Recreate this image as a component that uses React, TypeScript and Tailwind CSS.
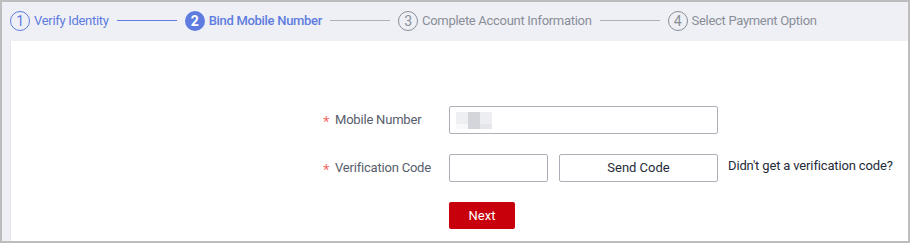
import React from 'react';

// ─── Steps ────────────────────────────────────────────────────────

const STEPS = [
  { n: 1, label: 'Verify Identity', state: 'done' },
  { n: 2, label: 'Bind Mobile Number', state: 'active' },
  { n: 3, label: 'Complete Account Information', state: 'todo' },
  { n: 4, label: 'Select Payment Option', state: 'todo' },
] as const;

function StepCircle({ n, state }: { n: number; state: string }) {
  if (state === 'active') {
    return (
      <span className="w-[20px] h-[20px] rounded-full bg-[#5e7ce0] text-white text-[14px] font-bold flex items-center justify-center leading-none">
        {n}
      </span>
    );
  }
  return (
    <span
      className={
        state === 'done'
          ? 'w-[20px] h-[20px] rounded-full border border-[#5e7ce0] text-[#5e7ce0] text-[14px] flex items-center justify-center leading-none'
          : 'w-[20px] h-[20px] rounded-full border border-[#8a8e99] text-[#8a8e99] text-[14px] flex items-center justify-center leading-none'
      }
    >
      {n}
    </span>
  );
}

function Stepper() {
  return (
    <div className="h-[39px] flex items-center pl-[8px] pb-[2px] tracking-[-0.3px]">
      {STEPS.map((s, i) => (
        <div key={s.n} className="flex items-center">
          {i > 0 && (
            <span
              className={
                STEPS[i - 1].state === 'done'
                  ? 'w-[60px] h-px bg-[#5e7ce0] mx-[8px]'
                  : 'w-[60px] h-px bg-[#adb0b8] mx-[8px]'
              }
            />
          )}
          <StepCircle n={s.n} state={s.state} />
          <span
            className={
              s.state === 'active'
                ? 'ml-[4px] text-[13px] font-medium text-[#5e7ce0]'
                : s.state === 'done'
                ? 'ml-[4px] text-[13px] text-[#5e7ce0]'
                : 'ml-[4px] text-[13px] text-[#8a8e99]'
            }
          >
            {s.label}
          </span>
        </div>
      ))}
    </div>
  );
}

// ─── Form ─────────────────────────────────────────────────────────

function Label({ children }: { children: React.ReactNode }) {
  return (
    <div className="w-[126px] flex items-center text-[13px] text-[#575d6c] tracking-[-0.2px]">
      <span className="text-[#f66f6a] w-[12px] text-[15px] leading-none translate-y-[2px]">*</span>
      {children}
    </div>
  );
}

export default function App() {
  return (
    <div
      className="w-[910px] h-[243px] border-2 border-[#bdbdbd] bg-[#eef0f5] flex flex-col overflow-hidden"
      style={{ fontFamily: 'Roboto, "Liberation Sans", sans-serif' }}
    >
      <Stepper />

      <div className="flex-1 ml-[8px] bg-white border-l border-[#e4e6ec] pl-[312px] pt-[65px]">
        {/* Mobile number */}
        <div className="flex items-center h-[28px]">
          <Label>Mobile Number</Label>
          <div className="w-[269px] h-[28px] border border-[#adb0b8] rounded-[2px] flex items-center pl-[6px]">
            {/* masked value */}
            <div className="flex flex-col">
              <div className="flex">
                <span className="w-[12px] h-[12px] bg-[#eeeff2]" />
                <span className="w-[12px] h-[17px] bg-[#d3d5db]" />
                <span className="w-[12px] h-[12px] bg-[#eceef1]" />
              </div>
              <div className="flex -mt-[5px]">
                <span className="w-[12px] h-[5px] bg-[#f8f8fa]" />
                <span className="w-[12px] h-[5px] bg-transparent" />
                <span className="w-[12px] h-[5px] bg-[#e4e6ea]" />
              </div>
            </div>
          </div>
        </div>

        {/* Verification code */}
        <div className="flex items-center h-[28px] mt-[20px]">
          <Label>Verification Code</Label>
          <div className="w-[99px] h-[28px] border border-[#adb0b8] rounded-[2px]" />
          <button className="ml-[11px] w-[159px] h-[28px] border border-[#adb0b8] rounded-[2px] bg-white text-[13px] text-[#252b3a]">
            Send Code
          </button>
          <span className="ml-[10px] text-[13px] text-[#252b3a] tracking-[-0.15px] -mt-[4px]">
            Didn't get a verification code?
          </span>
        </div>

        {/* Next */}
        <div className="flex mt-[20px] ml-[126px]">
          <button className="w-[66px] h-[27px] rounded-[2px] bg-[#c7000b] text-white text-[13px]">
            Next
          </button>
        </div>
      </div>
    </div>
  );
}
